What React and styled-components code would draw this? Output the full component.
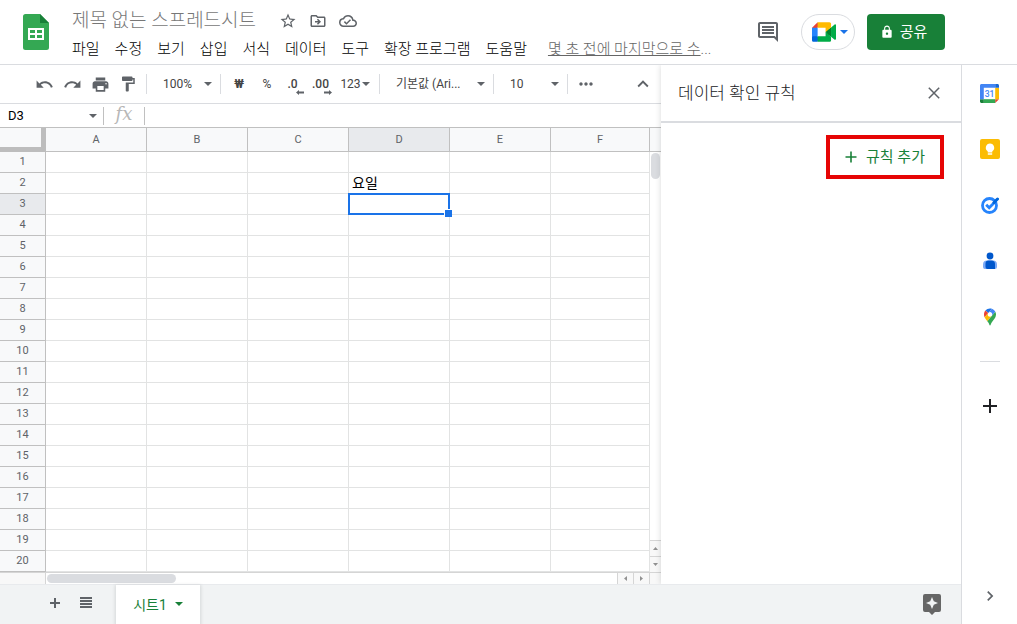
import React from "react";
import styled, { createGlobalStyle, css } from "styled-components";
import {
  MdExpandLess,
  MdChevronRight,
  MdFormatPaint,
  MdLock,
  MdMoreHoriz,
  MdOutlineCloudDone,
  MdOutlineDriveFileMove,
  MdOutlineInsertComment,
  MdPrint,
  MdRedo,
  MdStarBorder,
  MdUndo,
} from "react-icons/md";

const columns = ["A", "B", "C", "D", "E", "F"];
const rows = Array.from({ length: 20 }, (_, i) => i + 1);
const menus = ["파일", "수정", "보기", "삽입", "서식", "데이터", "도구", "확장 프로그램", "도움말"];
const cells = { D2: "요일" };
const active = { column: "D", row: 3 };

const Caret = ({ color = "#5f6368" }) => (
  <svg width="8" height="4" viewBox="0 0 8 4" fill={color} aria-hidden="true">
    <path d="M0 0h8L4 4z" />
  </svg>
);

const SheetsLogo = () => (
  <svg width="26" height="36" viewBox="0 0 26 36" aria-hidden="true">
    <path fill="#34a853" d="M2.500 0H17l9 9v24.500a2.500 2.500 0 0 1-2.500 2.500h-21A2.500 2.500 0 0 1 0 33.500v-31A2.500 2.500 0 0 1 2.500 0z" />
    <path fill="#188038" d="M17 0l9 9h-9z" />
    <path fill="#fff" fillRule="evenodd" d="M5 14h16v12H5zM7 16v3h5v-3zM14 16v3h5v-3zM7 21v3h5v-3zM14 21v3h5v-3z" />
  </svg>
);

const MeetLogo = () => (
  <svg width="24" height="20" viewBox="0 0 87.5 72" aria-hidden="true">
    <path fill="#00832d" d="M49.5 36l8.53 9.75 11.47 7.33 2-17.02-2-16.64-11.69 6.44z" />
    <path fill="#0066da" d="M0 51.5V66c0 3.315 2.685 6 6 6h14.5l3-10.96-3-9.54-9.95-3z" />
    <path fill="#e94235" d="M20.5 0L0 20.5l10.55 3 9.95-3 2.95-9.41z" />
    <path fill="#2684fc" d="M20.5 20.5H0v31h20.5z" />
    <path fill="#00ac47" d="M82.6 8.68L69.5 19.42v33.66l13.16 10.79c1.97 1.54 4.85.135 4.85-2.37V11c0-2.535-2.945-3.925-4.91-2.32zM49.5 36v15.5h-29V72h43c3.315 0 6-2.685 6-6V53.08z" />
    <path fill="#ffba00" d="M63.5 0h-43v20.5h29V36l20-16.57V6c0-3.315-2.685-6-6-6z" />
  </svg>
);

const CalendarLogo = () => (
  <svg width="19" height="19" viewBox="0 0 200 200" aria-hidden="true">
    <path fill="#fff" d="M160 40H40v120h120z" />
    <path fill="#ea4335" d="M160 200L200 160h-40z" />
    <path fill="#fbbc04" d="M200 40h-40v120h40z" />
    <path fill="#34a853" d="M160 160H40v40h120z" />
    <path fill="#188038" d="M0 160v24c0 9 7 16 16 16h24v-40z" />
    <path fill="#1967d2" d="M200 40V16c0-9-7-16-16-16h-24v40z" />
    <path fill="#4285f4" d="M160 0H16C7 0 0 7 0 16v144h40V40h120z" />
    <text x="100" y="132" fill="#4285f4" fontFamily="Roboto, sans-serif" fontSize="90" fontWeight="500" textAnchor="middle">
      31
    </text>
  </svg>
);

const KeepLogo = () => (
  <svg width="20" height="20" viewBox="0 0 20 20" aria-hidden="true">
    <rect width="20" height="20" rx="2" fill="#fbbc04" />
    <path fill="#fff" d="M10 4.500a4.200 4.200 0 0 0-2.300 7.700V13.500h4.600v-1.300A4.200 4.200 0 0 0 10 4.500zM7.800 14.300h4.400v1.400H7.800z" />
  </svg>
);

const TasksLogo = () => (
  <svg width="18" height="18" viewBox="0 0 18 18" fill="none" aria-hidden="true">
    <circle cx="8.500" cy="9.500" r="7" stroke="#2684fc" strokeWidth="2.800" />
    <path d="M5.200 8.800l3 3 5-5" stroke="#2684fc" strokeWidth="2.800" />
    <path d="M13 6.500l3.500-3.500" stroke="#0066da" strokeWidth="3" strokeLinecap="round" />
  </svg>
);

const ContactsLogo = () => (
  <svg width="14" height="18" viewBox="0 0 14 18" aria-hidden="true">
    <circle cx="7" cy="4" r="3.400" fill="#0057cc" />
    <path fill="#7baaf7" d="M4 8.500h6a4 4 0 0 1 4 4V15a2 2 0 0 1-2 2H2a2 2 0 0 1-2-2v-2.500a4 4 0 0 1 4-4z" />
    <path fill="#0057cc" d="M5.500 8.500h3a3.500 3.500 0 0 1 3.500 3.500v5H4.500A2 2 0 0 1 2.500 15v-3.500a3 3 0 0 1 3-3z" />
  </svg>
);

const MapsLogo = () => (
  <svg width="12" height="18" viewBox="0 0 92.3 132.3" aria-hidden="true">
    <path fill="#1a73e8" d="M60.2 2.2C55.8.8 51 0 46.1 0 32 0 19.3 6.4 10.8 16.5l21.8 18.3L60.2 2.2z" />
    <path fill="#ea4335" d="M10.8 16.5C4.1 24.5 0 34.9 0 46.1c0 8.7 1.7 15.7 4.6 22l28-33.3-21.8-18.3z" />
    <path fill="#4285f4" d="M46.2 28.5c9.8 0 17.7 7.9 17.7 17.7 0 4.3-1.6 8.3-4.2 11.4 0 0 13.9-16.6 27.5-32.7-5.6-10.8-15.3-19-27-22.7L32.6 34.8c3.3-3.8 8.1-6.3 13.6-6.3" />
    <path fill="#fbbc04" d="M46.2 63.8c-9.8 0-17.7-7.9-17.7-17.7 0-4.3 1.5-8.3 4.1-11.3l-28 33.3c4.8 10.6 12.8 19.2 21 29.9l34.1-40.5c-3.3 3.9-8.1 6.3-13.5 6.3" />
    <path fill="#34a853" d="M59.1 109.2c15.4-24.1 33.3-35 33.3-63 0-7.7-1.9-14.9-5.2-21.3L25.6 98c2.6 3.4 5.3 7.3 7.9 11.3 9.4 14.5 6.8 23.1 12.8 23.1s3.4-8.7 12.8-23.2" />
  </svg>
);

const DecimalArrow = ({ left }) => (
  <svg width="8" height="5" viewBox="0 0 8 5" fill="#5f6368" aria-hidden="true">
    <path d={left ? "M0 2.500L3 0v1.500h5v2H3V5z" : "M8 2.500L5 0v1.500H0v2h5V5z"} />
  </svg>
);

const addons = [
  { name: "캘린더", Logo: CalendarLogo },
  { name: "Keep", Logo: KeepLogo },
  { name: "Tasks", Logo: TasksLogo },
  { name: "연락처", Logo: ContactsLogo },
  { name: "지도", Logo: MapsLogo },
];

const App = () => {
  return (
    <>
      <GlobalStyle />
      <Page>
        <Header>
          <LogoLink href="#home" aria-label="스프레드시트 홈">
            <SheetsLogo />
          </LogoLink>
          <TitleBlock>
            <TitleRow>
              <Title>제목 없는 스프레드시트</Title>
              <IconButton $width={30} aria-label="별표">
                <MdStarBorder size={18} />
              </IconButton>
              <IconButton $width={30} aria-label="이동">
                <MdOutlineDriveFileMove size={18} />
              </IconButton>
              <IconButton $width={30} aria-label="문서 상태">
                <MdOutlineCloudDone size={18} />
              </IconButton>
            </TitleRow>
            <MenuBar>
              {menus.map((menu) => (
                <MenuButton key={menu}>{menu}</MenuButton>
              ))}
              <LastEdit href="#history">
                <u>몇 초 전에 마지막으로 수</u>...
              </LastEdit>
            </MenuBar>
          </TitleBlock>
          <HeaderActions>
            <IconButton $width={24} aria-label="댓글">
              <MdOutlineInsertComment size={24} />
            </IconButton>
            <MeetButton aria-label="화상 통화">
              <MeetLogo />
              <Caret color="#1a73e8" />
            </MeetButton>
            <ShareButton>
              <MdLock size={14} />
              공유
            </ShareButton>
          </HeaderActions>
        </Header>

        <Body>
          <Main>
            <Workspace>
              <Editor>
                <Toolbar>
                  <IconButton aria-label="실행취소">
                    <MdUndo size={19} />
                  </IconButton>
                  <IconButton aria-label="재실행">
                    <MdRedo size={19} />
                  </IconButton>
                  <IconButton aria-label="인쇄">
                    <MdPrint size={19} />
                  </IconButton>
                  <IconButton aria-label="서식 복사">
                    <MdFormatPaint size={18} />
                  </IconButton>
                  <Separator />
                  <SelectBox $width={65}>
                    <select aria-label="확대/축소">
                      <option>100%</option>
                    </select>
                    <Caret />
                  </SelectBox>
                  <Separator />
                  <TextButton $bold>₩</TextButton>
                  <TextButton>%</TextButton>
                  <DecimalButton aria-label="소수점 이하 자릿수 감소">
                    .0
                    <DecimalArrow left />
                  </DecimalButton>
                  <DecimalButton aria-label="소수점 이하 자릿수 증가">
                    .00
                    <DecimalArrow />
                  </DecimalButton>
                  <TextButton $width={38}>
                    123
                    <Caret />
                  </TextButton>
                  <Separator />
                  <SelectBox $width={105}>
                    <select aria-label="글꼴">
                      <option>기본값 (Ari...</option>
                    </select>
                    <Caret />
                  </SelectBox>
                  <Separator />
                  <SelectBox $width={65}>
                    <select aria-label="글꼴 크기">
                      <option>10</option>
                    </select>
                    <Caret />
                  </SelectBox>
                  <Separator />
                  <IconButton aria-label="더보기">
                    <MdMoreHoriz size={20} />
                  </IconButton>
                  <CollapseButton aria-label="메뉴 숨기기">
                    <MdExpandLess size={22} />
                  </CollapseButton>
                </Toolbar>

                <FormulaBar>
                  <NameBox>
                    <input aria-label="이름 상자" defaultValue="D3" />
                    <Caret />
                  </NameBox>
                  <FxLabel htmlFor="formula">fx</FxLabel>
                  <FormulaInput id="formula" />
                </FormulaBar>

                <GridArea>
                  <Sheet>
                    <colgroup>
                      <col className="rowhead" />
                      {columns.slice(0, -1).map((column) => (
                        <col key={column} className="column" />
                      ))}
                      <col />
                    </colgroup>
                    <thead>
                      <tr>
                        <Corner />
                        {columns.map((column) => (
                          <ColumnHead key={column} scope="col" $active={column === active.column}>
                            {column}
                          </ColumnHead>
                        ))}
                      </tr>
                    </thead>
                    <tbody>
                      {rows.map((row) => (
                        <tr key={row}>
                          <RowHead scope="row" $active={row === active.row}>
                            {row}
                          </RowHead>
                          {columns.map((column) => (
                            <Cell key={column}>
                              {cells[column + row]}
                              {column === active.column && row === active.row && <Selection />}
                            </Cell>
                          ))}
                        </tr>
                      ))}
                    </tbody>
                  </Sheet>
                  <VerticalScroll>
                    <div className="head" />
                    <div className="track">
                      <div className="thumb" />
                    </div>
                    <ScrollButton aria-label="위로">
                      <svg width="5" height="3" viewBox="0 0 5 3">
                        <path d="M0 3h5L2.500 0z" />
                      </svg>
                    </ScrollButton>
                    <ScrollButton aria-label="아래로">
                      <svg width="5" height="3" viewBox="0 0 5 3">
                        <path d="M0 0h5L2.500 3z" />
                      </svg>
                    </ScrollButton>
                  </VerticalScroll>
                </GridArea>
                <HorizontalScroll>
                  <div className="head" />
                  <div className="track">
                    <div className="thumb" />
                  </div>
                  <ScrollButton $side aria-label="왼쪽으로">
                    <svg width="3" height="5" viewBox="0 0 3 5">
                      <path d="M3 0v5L0 2.500z" />
                    </svg>
                  </ScrollButton>
                  <ScrollButton $side aria-label="오른쪽으로">
                    <svg width="3" height="5" viewBox="0 0 3 5">
                      <path d="M0 0v5l3-2.500z" />
                    </svg>
                  </ScrollButton>
                  <div className="end" />
                </HorizontalScroll>
              </Editor>

              <Panel>
                <PanelHeader>
                  <h2>데이터 확인 규칙</h2>
                  <IconButton aria-label="닫기">
                    <svg width="12" height="12" viewBox="0 0 12 12" stroke="currentColor" strokeWidth="1.500">
                      <path d="M.8.8l10.400 10.400M11.200.8L.8 11.200" />
                    </svg>
                  </IconButton>
                </PanelHeader>
                <PanelBody>
                  <AddRuleButton>
                    <svg width="12" height="12" viewBox="0 0 12 12" stroke="currentColor" strokeWidth="1.600">
                      <path d="M6 .5v11M.5 6h11" />
                    </svg>
                    규칙 추가
                  </AddRuleButton>
                </PanelBody>
              </Panel>
            </Workspace>

            <SheetBar>
              <IconButton aria-label="시트 추가">
                <svg width="10" height="10" viewBox="0 0 10 10" stroke="currentColor" strokeWidth="2">
                  <path d="M5 0v10M0 5h10" />
                </svg>
              </IconButton>
              <IconButton aria-label="모든 시트">
                <svg width="12" height="11" viewBox="0 0 12 11" fill="currentColor">
                  <path d="M0 0h12v2H0zM0 3h12v2H0zM0 6h12v2H0zM0 9h12v2H0z" />
                </svg>
              </IconButton>
              <SheetTab>
                시트1
                <Caret color="#188038" />
              </SheetTab>
              <ExploreButton aria-label="탐색">
                <svg width="18" height="21" viewBox="0 0 18 21">
                  <path fill="#666" d="M2 0h14a2 2 0 0 1 2 2v14a2 2 0 0 1-2 2h-4l-3 3-3-3H2a2 2 0 0 1-2-2V2a2 2 0 0 1 2-2z" />
                  <path fill="#f1f3f4" d="M9 3l1.800 4.200L15 9l-4.200 1.800L9 15l-1.800-4.200L3 9l4.200-1.800z" />
                </svg>
              </ExploreButton>
            </SheetBar>
          </Main>

          <Rail>
            {addons.map(({ name, Logo }) => (
              <RailButton key={name} aria-label={name}>
                <Logo />
              </RailButton>
            ))}
            <hr />
            <RailButton aria-label="부가기능 설치하기">
              <svg width="14" height="14" viewBox="0 0 14 14" stroke="#202124" strokeWidth="2">
                <path d="M7 0v14M0 7h14" />
              </svg>
            </RailButton>
            <RailButton className="toggle" aria-label="측면 패널 숨기기">
              <MdChevronRight size={20} />
            </RailButton>
          </Rail>
        </Body>
      </Page>
    </>
  );
};

const GlobalStyle = createGlobalStyle`
  * {
    box-sizing: border-box;
  }
  body {
    margin: 0;
    background: #fff;
    color: #202124;
    font-family: Roboto, "Noto Sans CJK KR", sans-serif;
    font-size: 12px;
  }
  button, input, select {
    margin: 0;
    padding: 0;
    border: 0;
    outline: 0;
    background: none;
    color: inherit;
    font: inherit;
  }
  svg {
    display: block;
    flex: none;
  }
`;

const center = css`
  display: flex;
  align-items: center;
  justify-content: center;
`;

const Page = styled.div`
  display: flex;
  flex-direction: column;
  min-height: 100vh;
`;

const Header = styled.header`
  display: flex;
  align-items: flex-start;
  padding-right: 72px;
  border-bottom: 1px solid #dadce0;
`;

const LogoLink = styled.a`
  padding: 14px 23px 14px 23px;
`;

const TitleBlock = styled.div`
  flex: 1;
  min-width: 0;
  padding-top: 7px;
`;

const TitleRow = styled.div`
  display: flex;
  align-items: center;
  height: 28px;
`;

const Title = styled.h1`
  margin: 0 17px 0 0;
  color: #777;
  font-size: 19px;
  font-weight: 300;
  line-height: 28px;
  white-space: nowrap;
`;

const MenuBar = styled.nav`
  display: flex;
  gap: 15px;
  height: 28px;
  font-size: 15px;
  font-weight: 300;
  line-height: 28px;
  white-space: nowrap;
`;

const MenuButton = styled.button`
  color: #000;
`;

const LastEdit = styled.a`
  margin-left: 6px;
  color: #666;
  text-decoration: none;
`;

const HeaderActions = styled.div`
  display: flex;
  align-items: center;
  padding-top: 14px;
`;

const IconButton = styled.button`
  ${center}
  flex: none;
  width: ${({ $width = 28 }) => $width}px;
  height: 28px;
  color: #5f6368;
`;

const MeetButton = styled.button`
  ${center}
  gap: 4px;
  width: 54px;
  height: 36px;
  margin: 0 12px 0 21px;
  padding-left: 3px;
  border: 1px solid #dadce0;
  border-radius: 18px;
`;

const ShareButton = styled.button`
  ${center}
  gap: 6px;
  width: 78px;
  height: 36px;
  padding-right: 5px;
  border-radius: 4px;
  background: #188038;
  color: #fff;
  font-size: 15px;
  line-height: 20px;
`;

const Body = styled.div`
  display: flex;
  flex: 1;
`;

const Main = styled.main`
  display: flex;
  flex: 1;
  flex-direction: column;
  min-width: 0;
`;

const Workspace = styled.div`
  display: flex;
  flex: 1;
`;

const Editor = styled.section`
  flex: 1;
  min-width: 0;
`;

const Toolbar = styled.div`
  display: flex;
  align-items: center;
  height: 39px;
  padding: 0 4px 0 30px;
  border-bottom: 1px solid #dadce0;
  color: #444;
`;

const Separator = styled.span`
  flex: none;
  width: 1px;
  height: 20px;
  margin: 0 4px;
  background: #dadce0;
`;

const SelectBox = styled.label`
  display: flex;
  flex: none;
  align-items: center;
  width: ${({ $width }) => $width}px;
  padding: 0 4px 0 12px;

  select {
    flex: 1;
    min-width: 0;
    height: 26px;
    appearance: none;
  }
`;

const TextButton = styled.button`
  ${center}
  flex: none;
  gap: 1px;
  width: ${({ $width = 28 }) => $width}px;
  height: 28px;
  padding-right: ${({ $width }) => ($width ? 2 : 0)}px;
  font-weight: ${({ $bold }) => ($bold ? 700 : 400)};
`;

const DecimalButton = styled.button`
  display: flex;
  flex: none;
  flex-direction: column;
  align-items: center;
  width: 28px;
  padding: 4px 5px 0 0;
  font-size: 12px;
  font-weight: 500;
  line-height: 12px;

  svg {
    align-self: flex-end;
  }
`;

const CollapseButton = styled(IconButton)`
  margin-left: auto;
`;

const FormulaBar = styled.div`
  display: flex;
  align-items: center;
  height: 24px;
  border-bottom: 1px solid #c0c0c0;
`;

const NameBox = styled.label`
  display: flex;
  align-items: center;
  width: 104px;
  height: 18px;
  padding: 0 6px 0 8px;
  border-right: 1px solid #c0c0c0;
  font-size: 13px;

  input {
    flex: 1;
    min-width: 0;
    color: #000;
  }
`;

const FxLabel = styled.label`
  width: 41px;
  height: 18px;
  border-right: 1px solid #c0c0c0;
  color: #b7b7b7;
  font-family: "DejaVu Serif", serif;
  font-size: 18px;
  font-style: italic;
  line-height: 14px;
  text-align: center;
`;

const FormulaInput = styled.input`
  flex: 1;
  min-width: 0;
`;

const GridArea = styled.div`
  display: flex;
`;

const Sheet = styled.table`
  flex: 1;
  min-width: 0;
  table-layout: fixed;
  border-spacing: 0;

  .rowhead {
    width: 46px;
  }
  .column {
    width: 101px;
  }
`;

const headCell = css`
  padding: 0;
  border: solid #c0c0c0;
  border-width: 0 1px 1px 0;
  background: ${({ $active }) => ($active ? "#e8eaed" : "#f8f9fa")};
  color: #5f6368;
  font-size: 11px;
  font-weight: 400;
`;

const Corner = styled.td`
  padding: 0;
  border: solid #bdbdbd;
  border-width: 0 5px 5px 0;
  background: #f8f9fa;
`;

const ColumnHead = styled.th`
  ${headCell}
  height: 24px;
`;

const RowHead = styled.th`
  ${headCell}
  height: 21px;
  padding-bottom: 2px;
`;

const Cell = styled.td`
  position: relative;
  height: 21px;
  padding: 0 3px;
  border: solid #e2e3e3;
  border-width: 0 1px 1px 0;
  color: #000;
  font-size: 14px;
  line-height: 20px;
`;

const Selection = styled.div`
  position: absolute;
  z-index: 1;
  inset: -1px;
  border: 2px solid #1a73e8;

  &::after {
    position: absolute;
    right: -4px;
    bottom: -4px;
    width: 7px;
    height: 7px;
    border: solid #fff;
    border-width: 1px 0 0 1px;
    background: #1a73e8;
    content: "";
  }
`;

const VerticalScroll = styled.div`
  display: flex;
  flex: none;
  flex-direction: column;
  width: 11px;

  .head {
    height: 24px;
    border-bottom: 1px solid #c0c0c0;
    background: #f8f9fa;
  }
  .track {
    flex: 1;
    padding: 1px;
  }
  .thumb {
    width: 9px;
    height: 26px;
    border-radius: 5px;
    background: #dadce0;
  }
`;

const HorizontalScroll = styled.div`
  display: flex;
  height: 12px;
  border-top: 1px solid #d5d5d5;

  .head {
    width: 46px;
    border-right: 1px solid #d5d5d5;
    background: #f8f8f8;
  }
  .track {
    flex: 1;
    padding: 1px;
  }
  .thumb {
    width: 129px;
    height: 9px;
    border-radius: 5px;
    background: #dadce0;
  }
  .end {
    width: 12px;
    border-left: 1px solid #d5d5d5;
    background: #f8f8f8;
  }
`;

const ScrollButton = styled.button`
  ${center}
  flex: none;
  width: ${({ $side }) => ($side ? "16px" : "auto")};
  height: ${({ $side }) => ($side ? "auto" : "16px")};
  border: solid #d5d5d5;
  border-width: ${({ $side }) => ($side ? "0 0 0 1px" : "1px 0 0 0")};
  background: #f8f8f8;

  svg {
    fill: #919191;
  }
`;

const Panel = styled.aside`
  z-index: 1;
  width: 300px;
  background: #fff;
  box-shadow: 0 0 6px rgba(60, 64, 67, 0.2);
  clip-path: inset(0 0 0 -8px);
`;

const PanelHeader = styled.div`
  display: flex;
  align-items: center;
  justify-content: space-between;
  height: 58px;
  padding: 0 13px 0 17px;
  border-bottom: 2px solid #dadce0;

  h2 {
    margin: 0;
    font-size: 17px;
    font-weight: 300;
    line-height: 24px;
  }
`;

const PanelBody = styled.div`
  display: flex;
  justify-content: flex-end;
  padding: 12px 17px;
`;

const AddRuleButton = styled.button`
  ${center}
  gap: 9px;
  width: 118px;
  height: 44px;
  border: 4px solid #e60505;
  color: #188038;
  font-size: 15px;
  line-height: 20px;
`;

const SheetBar = styled.footer`
  display: flex;
  align-items: center;
  gap: 3px;
  height: 40px;
  padding: 0 20px 0 41px;
  border-top: 1px solid #e8eaed;
  background: #f1f3f4;

  ${IconButton} {
    padding-bottom: 4px;
  }
`;

const SheetTab = styled.button`
  ${center}
  gap: 8px;
  align-self: stretch;
  width: 84px;
  margin-left: 13px;
  padding-bottom: 2px;
  background: #fff;
  box-shadow: 0 1px 3px 1px rgba(60, 64, 67, 0.15);
  color: #188038;
  font-size: 14px;
`;

const ExploreButton = styled.button`
  margin-left: auto;
`;

const Rail = styled.aside`
  display: flex;
  flex-direction: column;
  align-items: center;
  width: 56px;
  border-left: 1px solid #dadce0;

  hr {
    width: 20px;
    height: 1px;
    margin: 16px 0;
    border: 0;
    background: #dadce0;
  }
  .toggle {
    margin-top: auto;
  }
`;

const RailButton = styled.button`
  ${center}
  width: 55px;
  height: 56px;
  color: #5f6368;
`;

export default App;
